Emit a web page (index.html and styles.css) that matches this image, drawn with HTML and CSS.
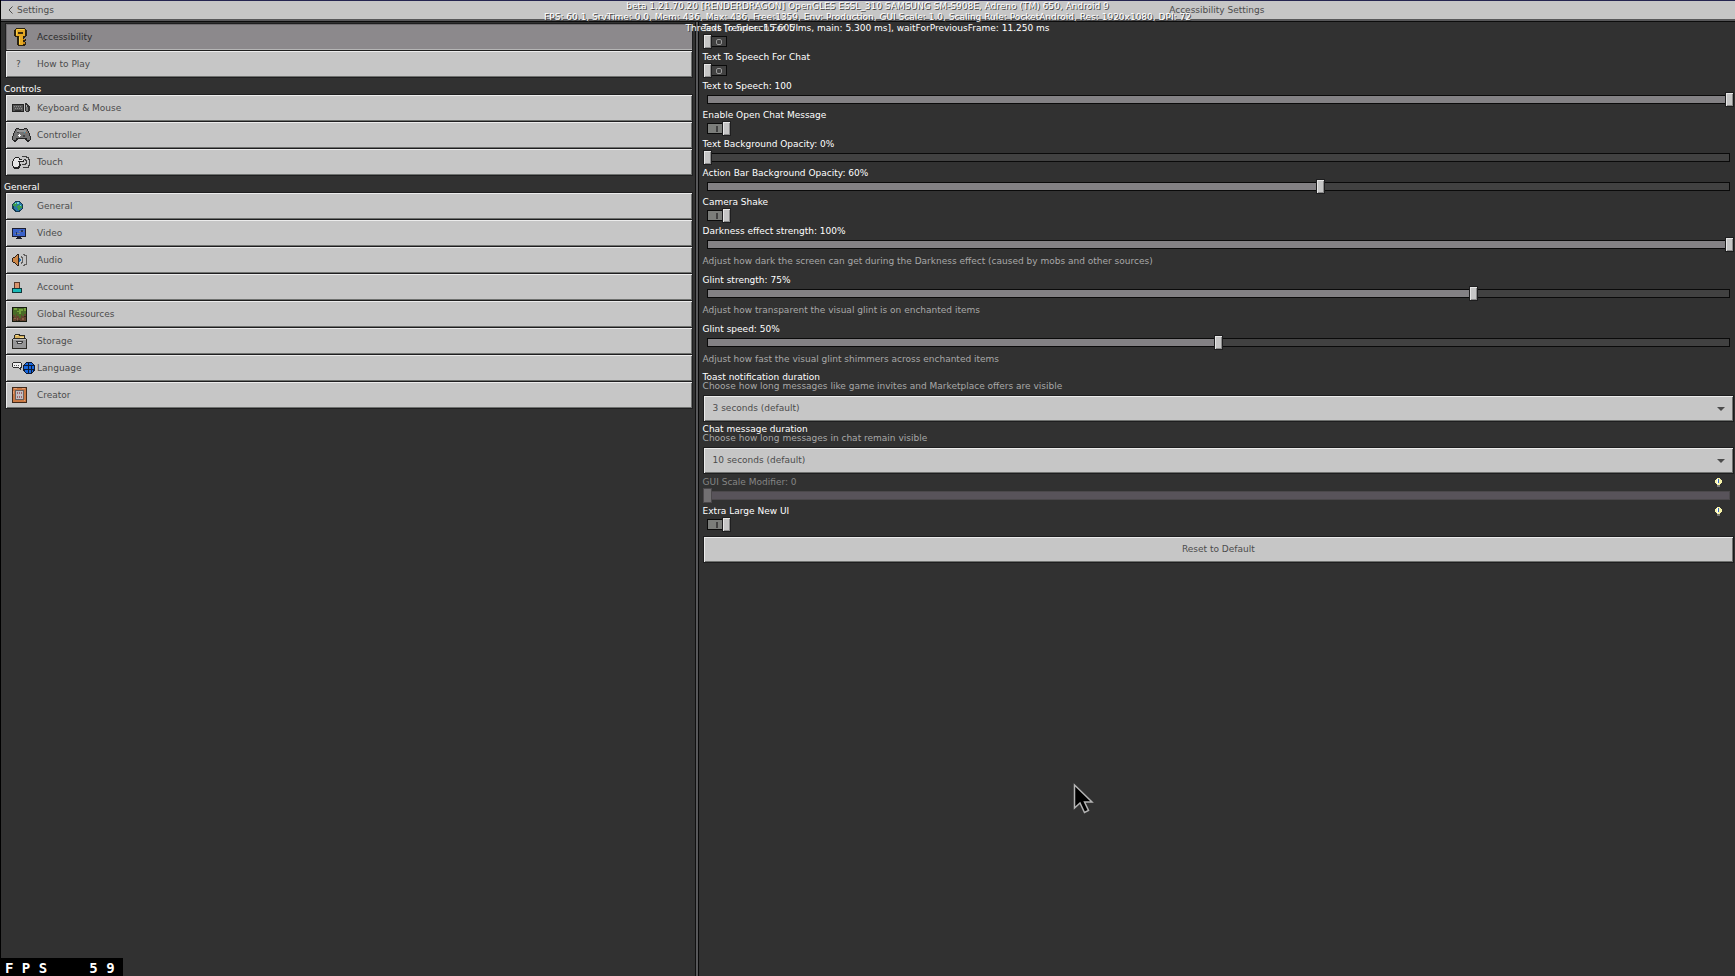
FILE: index.html
```html
<!DOCTYPE html>
<html lang="en">
<head>
	<meta charset="utf-8">
	<title>Settings</title>
	<link rel="stylesheet" href="styles.css">
</head>
<body>
	<header class="topbar">
		<a class="back" href="#">
			<svg width="5" height="8" viewBox="0 0 5 8"><path d="M4.5 0.5L1 4l3.500 3.500" fill="none" stroke="#4c4c4c"/></svg>
			Settings
		</a>
		<h1 class="title">Accessibility Settings</h1>
	</header>

	<div class="panes">
		<nav class="sidebar">
			<ul class="menu">
				<li><a class="item selected" href="#">
					<span class="icon"><svg class="push" width="13" height="18" viewBox="0 0 13 18"><path fill="#2a2110" d="M2 0h9v1h1v1h1v6h-1v1h-1v1h-1v1h2v2h-1v1h1v3h-1v1H4v-1H3V9H1V8H0V2h1V1h1z"/><path fill="#e5a823" d="M2 1h9v7H9v9H5V8H2z"/><path fill="#f8cf4a" d="M3 1h7v1H3zM2 2h1v5H2zM5 9h1v7H5z"/><path fill="#3b2c0f" d="M4 4h5v2H4z"/><path fill="#c38416" d="M9 11h2v1H9zM9 14h2v2H9z"/></svg></span>
					Accessibility</a></li>
				<li><a class="item" href="#"><span class="icon"><span class="question">?</span></span>How to Play</a></li>
			</ul>

			<h2 class="heading">Controls</h2>
			<ul class="menu">
				<li><a class="item" href="#">
					<span class="icon"><svg width="18" height="10" viewBox="0 0 18 10"><path fill="#222" d="M0 1h12v8H0z"/><path fill="#555" d="M1 2h10v6H1z"/><path fill="#8b8b8b" d="M2 3h1v1H2zM4 3h1v1H4zM6 3h1v1H6zM8 3h1v1H8zM3 5h1v1H3zM5 5h1v1H5zM7 5h1v1H7zM9 5h1v1H9z"/><path fill="#303030" d="M3 7h6v1H3zM13 0h2v1h1v1h1v1h1v5h-1v1h-3V8h-1z"/><path fill="#777" d="M14 4h2v4h-2z"/><path fill="#aaa" d="M14 2h1v2h-1z"/></svg></span>
					Keyboard &amp; Mouse</a></li>
				<li><a class="item" href="#">
					<span class="icon"><svg width="19" height="14" viewBox="0 0 19 14"><path fill="#252525" d="M4 0h3v1h5V0h3v1h1v2h1v2h1v3h1v4h-1v1h-1v1h-2v-1h-1v-1h-1v-1H6v1H5v1H4v1H2v-1H1v-1H0V8h1V5h1V3h1V1h1z"/><path fill="#737373" d="M4 1h3v1h5V1h3v2h1v2h1v3h1v4h-3v-2H4v2H1V8h1V5h1V3h1z"/><path fill="#979797" d="M5 2h9v2H5z"/><path fill="#fff" d="M7 6h1v3H7zM6 7h3v1H6z"/><path fill="#4ba0b8" d="M12 4h1v1h-1z"/><path fill="#b6734c" d="M14 4h1v1h-1z"/><path fill="#444" d="M5 4h2v1H5zM11 7h2v2h-2z"/></svg></span>
					Controller</a></li>
				<li><a class="item" href="#">
					<span class="icon"><svg width="18" height="13" viewBox="0 0 18 13"><path fill="#222" d="M3 1h4v1h1v1h2v1h2v2H8v2h1v2H8v2H7v1H2v-1H1v-2H0V5h1V3h1V2h1z"/><path fill="#e6e6e6" d="M3 2h4v2h4v1H6v1h1v4H6v1H2v-1H1V5h1V3h1z"/><path fill="none" stroke="#3e3e3e" d="M10 0.500h4v1h2v2h1v6h-1v2h-5M12 3.500h1.500v1h1v3h-1v1h-3.500"/></svg></span>
					Touch</a></li>
			</ul>

			<h2 class="heading">General</h2>
			<ul class="menu">
				<li><a class="item" href="#">
					<span class="icon"><svg width="11" height="11" viewBox="0 0 11 11"><path fill="#153a50" d="M3 0h5v1h1v1h1v1h1v5h-1v1H9v1H8v1H3v-1H2V9H1V8H0V3h1V2h1V1h1z"/><path fill="#2777a6" d="M3 1h5v1h1v1h1v5H9v1H7v1H4V9H3V8H2V3h1z"/><path fill="#3b9c4b" d="M2 2h3v2H4v2H3V5H1V3h1zM6 4h3v1h1v2H8v2H6V7H5V5h1z"/><path fill="#6ed0d8" d="M5 1h2v2H5zM3 2h1v1H3zM8 4h1v1H8z"/></svg></span>
					General</a></li>
				<li><a class="item" href="#">
					<span class="icon"><svg width="14" height="11" viewBox="0 0 14 11"><path fill="#1c1c2c" d="M0 0h14v9H9v1h1v1H4v-1h1V9H0z"/><path fill="#3a62ca" d="M1 1h12v7H1z"/><path fill="#777e91" d="M3 5h5v1H3zM7 3h5v1H7z"/><path fill="#24355d" d="M4 4h1v3H4zM9 2h2v2H9z"/></svg></span>
					Video</a></li>
				<li><a class="item" href="#">
					<span class="icon"><svg width="15" height="12" viewBox="0 0 15 12"><path fill="#302115" d="M5 0h2v12H5v-1H4v-1H3V9H1V8H0V4h1V3h2V2h1V1h1z"/><path fill="#cc8747" d="M5 1h1v10H5v-1H4V9H3V8H1V4h2V3h1V2h1z"/><path fill="#2373b5" d="M7 4h1v1h1v2H8v1H7z"/><path fill="none" stroke="#62605e" d="M9.500 2v1.500h1v5h-1V10M11 0.500h1.500v1h1.500v9h-1.500v1H11"/></svg></span>
					Audio</a></li>
				<li><a class="item" href="#">
					<span class="icon"><svg width="10" height="11" viewBox="0 0 10 11"><path fill="#583a2b" d="M2 0h6v6H2z"/><path fill="#d9936c" d="M3 1h4v5H3z"/><path fill="#123739" d="M0 6h10v5H0z"/><path fill="#19bab7" d="M1 7h8v3H1z"/></svg></span>
					Account</a></li>
				<li><a class="item" href="#">
					<span class="icon"><svg width="15" height="15" viewBox="0 0 15 15"><path fill="#151a0e" d="M0 0h15v15H0z"/><path fill="#64442f" d="M1 1h13v13H1z"/><path fill="#496b27" d="M1 1h13v6h-2v2h-2V8H9v3H7V9H5V7H4v3H3V8H1z"/><path fill="#72a03b" d="M2 1h3v2H2zM7 2h4v2H9v3H7V5H5V4h2zM12 1h2v3h-2z"/><path fill="#8a6247" d="M2 11h2v1H2zM5 11h1v2H5zM10 11h2v2h-2z"/><path fill="#3a2c20" d="M1 10h1v1H1zM6 13h2v1H6zM12 9h2v1h-2zM4 13h1v1H4z"/></svg></span>
					Global Resources</a></li>
				<li><a class="item" href="#">
					<span class="icon"><svg width="15" height="15" viewBox="0 0 15 15"><path fill="#2c2a24" d="M3 0h5v1h5v3h1v1h1v10H0V5h1V4h1V1h1z"/><path fill="#dbb45d" d="M3 1h4v1h5v2H3z"/><path fill="#f6dc94" d="M4 1h2v1H4zM8 3h4v1H8z"/><path fill="#969696" d="M1 6h13v8H1z"/><path fill="#bebebe" d="M1 5h13v1H1z"/><path fill="#3d3d3d" d="M4 7h7v1H4zM5 8h1v1h4V8h1v1h-1v1H5z"/><path fill="#e4e4e4" d="M6 8h3v1H6z"/></svg></span>
					Storage</a></li>
				<li><a class="item" href="#">
					<span class="icon"><svg width="23" height="12" viewBox="0 0 23 12"><path fill="#303030" d="M1 0h8v1h1v5H9v2H8V7H7V6H1V5H0V1h1z"/><path fill="#eee" d="M1 1h8v4H8v1H7V5H1z"/><path fill="#555" d="M2 3h1v1H2zM4 3h1v1H4zM6 3h1v1H6z"/><path fill="#101c36" d="M14 0h6v1h1v1h1v1h1v6h-1v1h-1v1h-1v1h-6v-1h-1v-1h-1V9h-1V3h1V2h1V1h1z"/><path fill="#1667df" d="M14 1h2v2h-3V2h1zM17 1h3v1h1v1h-4zM12 4h4v3h-4zM17 4h2v3h-2zM20 4h2v3h-2zM13 8h3v3h-2v-1h-1zM17 8h2v3h-2zM20 8h1v2h-1z"/></svg></span>
					Language</a></li>
				<li><a class="item" href="#">
					<span class="icon"><svg width="15" height="16" viewBox="0 0 15 16"><path fill="#40291b" d="M0 0h15v16H0z"/><path fill="#c87843" d="M1 1h13v14H1z"/><path fill="#e3a074" d="M2 1h3v1H2zM1 4h1v3H1zM12 13h1v1h-1zM10 1h3v1h-3z"/><path fill="#69605d" d="M3 3h9v10H3z"/><path fill="#c2bec2" d="M4 4h7v8H4z"/><path fill="#a2676a" d="M5 5h1v2H5zM7 5h1v2H7zM9 5h1v2H9zM5 9h1v2H5zM7 9h1v2H7zM9 9h1v2H9z"/></svg></span>
					Creator</a></li>
			</ul>
		</nav>

		<main class="content">
			<div class="setting">
				<label for="tts-ui">Text To Speech For UI</label>
				<input class="toggle" type="checkbox" id="tts-ui">
			</div>
			<div class="setting">
				<label for="tts-chat">Text To Speech For Chat</label>
				<input class="toggle" type="checkbox" id="tts-chat">
			</div>
			<div class="setting">
				<label for="tts-volume">Text to Speech: 100</label>
				<input class="slider" type="range" id="tts-volume" value="100" style="--value: 100%">
			</div>
			<div class="setting">
				<label for="open-chat">Enable Open Chat Message</label>
				<input class="toggle" type="checkbox" id="open-chat" checked>
			</div>
			<div class="setting">
				<label for="text-opacity">Text Background Opacity: 0%</label>
				<input class="slider" type="range" id="text-opacity" value="0" style="--value: 0%">
			</div>
			<div class="setting">
				<label for="bar-opacity">Action Bar Background Opacity: 60%</label>
				<input class="slider" type="range" id="bar-opacity" value="60" style="--value: 60%">
			</div>
			<div class="setting">
				<label for="shake">Camera Shake</label>
				<input class="toggle" type="checkbox" id="shake" checked>
			</div>
			<div class="setting">
				<label for="darkness">Darkness effect strength: 100%</label>
				<input class="slider" type="range" id="darkness" value="100" style="--value: 100%">
				<p class="note">Adjust how dark the screen can get during the Darkness effect (caused by mobs and other sources)</p>
			</div>
			<div class="setting">
				<label for="glint-strength">Glint strength: 75%</label>
				<input class="slider" type="range" id="glint-strength" value="75" style="--value: 75%">
				<p class="note">Adjust how transparent the visual glint is on enchanted items</p>
			</div>
			<div class="setting">
				<label for="glint-speed">Glint speed: 50%</label>
				<input class="slider" type="range" id="glint-speed" value="50" style="--value: 50%">
				<p class="note">Adjust how fast the visual glint shimmers across enchanted items</p>
			</div>
			<div class="choice">
				<label for="toast">Toast notification duration</label>
				<p>Choose how long messages like game invites and Marketplace offers are visible</p>
				<div class="dropdown">
					<select id="toast"><option>3 seconds (default)</option></select>
				</div>
			</div>
			<div class="choice">
				<label for="chat-duration">Chat message duration</label>
				<p>Choose how long messages in chat remain visible</p>
				<div class="dropdown">
					<select id="chat-duration"><option>10 seconds (default)</option></select>
				</div>
			</div>
			<div class="setting disabled">
				<div class="line">
					<label for="gui-scale">GUI Scale Modifier: 0</label>
					<svg width="7" height="9" viewBox="0 0 7 9"><path fill="#f6f2a8" d="M2 0h3v1h1v1h1v3H6v1H5v1H2V6H1V5H0V2h1V1h1z"/><path fill="#fff" d="M2 1h1v5H2z"/><path fill="#346bc0" d="M3 1h1v4H3z"/><path fill="#777" d="M2 7h3v2H2z"/></svg>
				</div>
				<input class="slider" type="range" id="gui-scale" value="0" style="--value: 0%" disabled>
			</div>
			<div class="setting">
				<div class="line">
					<label for="large-ui">Extra Large New UI</label>
					<svg width="7" height="9" viewBox="0 0 7 9"><path fill="#f6f2a8" d="M2 0h3v1h1v1h1v3H6v1H5v1H2V6H1V5H0V2h1V1h1z"/><path fill="#fff" d="M2 1h1v5H2z"/><path fill="#346bc0" d="M3 1h1v4H3z"/><path fill="#777" d="M2 7h3v2H2z"/></svg>
				</div>
				<input class="toggle" type="checkbox" id="large-ui" checked>
			</div>
			<button class="reset" type="button">Reset to Default</button>
		</main>
	</div>

	<!-- debug text drawn over the whole screen -->
	<div class="debug">
		<p>beta 1.21.70.20 [RENDERDRAGON] OpenGLES ESSL_310 SAMSUNG SM-S908E, Adreno (TM) 650, Android 9</p>
		<p>FPS: 60.1, SrvTime: 0.0, Mem: 436, Max: 436, Free:1359, Env: Production, GUI Scale: 1.0, Scaling Rule: PocketAndroid, Res: 1920x1080, DPI: 72</p>
		<p>Threads [render: 15.605 ms, main: 5.300 ms], waitForPreviousFrame: 11.250 ms</p>
	</div>
	<div class="fps">F P S     5 9</div>
	<svg class="cursor" width="21" height="31" viewBox="0 0 21 31"><path d="M1.500 2v23l5.500-5 4.500 9.500 4-2-4-8.500h7.500z" fill="#000" stroke="#b4b4b4" stroke-width="1.500"/></svg>
</body>
</html>
```

FILE: styles.css
```css
*, *::before, *::after {
	box-sizing: border-box;
}

body {
	margin: 0;
	min-height: 100vh;
	display: flex;
	flex-direction: column;
	border-left: 1px solid #000;
	background: #313131;
	color: #fff;
	font: 9px/11px "DejaVu Sans", sans-serif;
	overflow: hidden;
}

h1, h2, p, ul {
	margin: 0;
	padding: 0;
	font-size: 9px;
	font-weight: normal;
}

ul {
	list-style: none;
}

a {
	color: inherit;
	text-decoration: none;
}

.topbar {
	display: grid;
	grid-template-columns: 40% 60%;
	align-items: center;
	height: 22px;
	padding-bottom: 2px;
	background: #c6c6c6;
	border-top: 1px solid #252550;
	border-bottom: 1px solid #0c0c0c;
	box-shadow: inset 0 -2px #58585a;
	color: #4c4c4c;
}

.back {
	display: flex;
	align-items: center;
	gap: 4px;
	padding-left: 7px;
}

.title {
	padding-left: 4px;
	text-align: center;
}

.panes {
	flex: 1;
	display: flex;
}

/* left menu */
.sidebar {
	width: 40%;
	padding: 1px 2px 0 3px;
}

.menu {
	margin-left: 1px;
	border: 1px solid #1e1e1f;
	border-bottom: 0;
}

.item {
	display: flex;
	align-items: center;
	height: 27px;
	padding-left: 6px;
	background: #c6c6c6;
	border-bottom: 1px solid #1e1e1f;
	box-shadow: inset 1px 1px #ececec, inset -1px -1px #6f716f;
	color: #4c4c4c;
}

.item.selected {
	background: #8c898c;
	box-shadow: inset 1px 1px #6f6c6f, inset 0 -1px #b5b5b5;
	color: #2b2b2b;
}

.icon {
	flex: 0 0 25px;
	display: flex;
	align-items: center;
}

.icon svg {
	flex: none;
	shape-rendering: crispEdges;
}

.push {
	margin-left: 2px;
}

.question {
	margin-left: 4px;
}

.heading {
	padding-top: 7px;
	line-height: 9px;
}

/* settings on the right */
.content {
	flex: 1;
	padding: 0 1px 0 4px;
	border-left: 4px solid;
	border-image: linear-gradient(90deg, #111 1px, #58585a 1px, #58585a 3px, #0a0a0a 3px) 0 0 0 4;
}

.setting {
	padding-bottom: 2px;
}

.setting label {
	display: block;
	padding-top: 1px;
}

.slider, .toggle {
	appearance: none;
	display: flex;
	align-items: center;
	margin: 0;
	height: 15px;
}

.slider {
	--edge: #0a0a0a;
	--fill: #838184;
	--rest: #414141;
	width: 100%;
	background:
		linear-gradient(90deg, var(--fill) var(--value), var(--rest) var(--value)) no-repeat 5px 4px / calc(100% - 10px) 7px,
		linear-gradient(var(--edge), var(--edge)) no-repeat 4px 3px / calc(100% - 8px) 9px;
}

.slider::-webkit-slider-thumb, .toggle::before {
	appearance: none;
	box-sizing: border-box;
	content: "";
	width: 9px;
	height: 15px;
	background: #c6c6c6;
	border: 1px solid #1e1e1f;
	border-radius: 0;
	box-shadow: inset 1px 1px #e6e6e6, inset -1px -1px #8a8a8a;
}

.toggle {
	width: 28px;
	background:
		linear-gradient(#414141, #414141) no-repeat 5px 3px / 18px 9px,
		linear-gradient(#0a0a0a, #0a0a0a) no-repeat 4px 2px / 20px 11px;
}

.toggle::after {
	content: "";
	width: 6px;
	height: 6px;
	margin-left: 4px;
	border: 1px solid #9a9a9a;
	border-radius: 2px;
}

.toggle:checked {
	flex-direction: row-reverse;
	background:
		linear-gradient(#7b7d7a, #7b7d7a) no-repeat 5px 3px / 18px 9px,
		linear-gradient(#0a0a0a, #0a0a0a) no-repeat 4px 2px / 20px 11px;
}

.toggle:checked::after {
	width: 2px;
	margin: 0 4px 0 auto;
	border-radius: 0;
	border-color: #414141;
}

.note {
	padding: 4px 0 5px;
	color: #a8a8a8;
}

.choice {
	padding: 1px 0 2px;
	line-height: 9px;
}

.choice label {
	display: block;
}

.choice p {
	margin-bottom: 4px;
	color: #a8a8a8;
}

.dropdown {
	display: grid;
	align-items: center;
}

.dropdown select, .dropdown::after {
	grid-area: 1 / 1;
}

.dropdown::after {
	content: "";
	justify-self: end;
	margin-right: 9px;
	border: 4px solid transparent;
	border-top-color: #4c4c4c;
	border-bottom: 0;
}

.dropdown select, .reset {
	appearance: none;
	width: 100%;
	height: 27px;
	padding: 0 9px;
	background: #c6c6c6;
	border: 1px solid #1e1e1f;
	border-radius: 0;
	box-shadow: inset 1px 1px #ececec, inset -1px -1px #6f716f;
	color: #4c4c4c;
	font: inherit;
}

.reset {
	margin-top: 2px;
}

.line {
	display: flex;
	justify-content: space-between;
	padding-right: 12px;
}

.line svg {
	margin-top: 2px;
	shape-rendering: crispEdges;
}

.disabled label {
	color: #858585;
}

.disabled .slider {
	--edge: #4b484b;
	--fill: #58535a;
	--rest: #58535a;
}

.disabled .slider::-webkit-slider-thumb {
	background: #727072;
	border-color: #4b484b;
	box-shadow: none;
}

/* overlays */
.debug {
	position: absolute;
	top: 1px;
	left: 0;
	right: 0;
	text-align: center;
	text-shadow: 1px 1px #3f3f3f;
	pointer-events: none;
}

.fps {
	position: absolute;
	left: 0;
	bottom: 0;
	padding: 2px 8px 0 5px;
	background: #000;
	font: bold 14px/16px "DejaVu Sans Mono", monospace;
	white-space: pre;
}

.cursor {
	position: absolute;
	left: 1073px;
	top: 783px;
}
```
